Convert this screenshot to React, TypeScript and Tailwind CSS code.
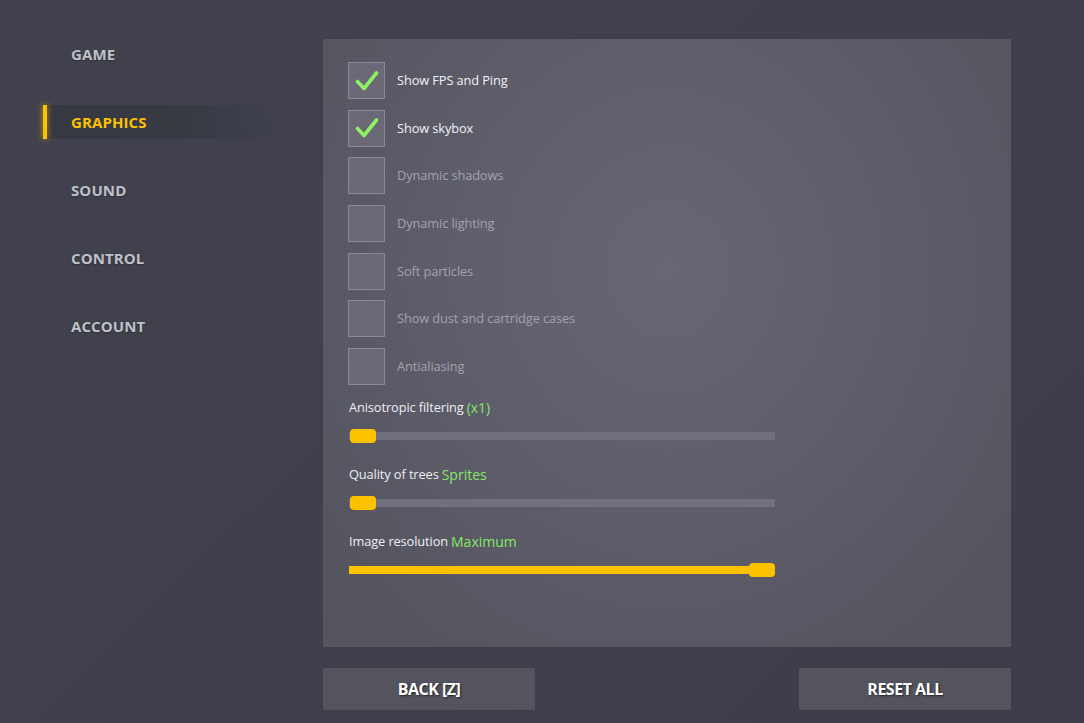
import React from "react";

// ── Data ──────────────────────────────────────────────────────

const menu = ["GAME", "GRAPHICS", "SOUND", "CONTROL", "ACCOUNT"];

const options = [
  { label: "Show FPS and Ping", checked: true },
  { label: "Show skybox", checked: true },
  { label: "Dynamic shadows", checked: false },
  { label: "Dynamic lighting", checked: false },
  { label: "Soft particles", checked: false },
  { label: "Show dust and cartridge cases", checked: false },
  { label: "Antialiasing", checked: false },
];

const sliders = [
  { label: "Anisotropic filtering", value: "(x1)", pct: 0 },
  { label: "Quality of trees", value: "Sprites", pct: 0 },
  { label: "Image resolution", value: "Maximum", pct: 100 },
];

// ── Checkbox ──────────────────────────────────────────────────

function Checkbox({ label, checked }: { label: string; checked: boolean }) {
  return (
    <div className="flex items-center gap-3 h-[37px]">
      <div className="w-[37px] h-[37px] shrink-0 border border-[#8b8996] bg-[#6b6977] flex items-center justify-center">
        {checked && (
          <svg width="24" height="22" viewBox="0 0 24 22">
            <polyline
              points="2.5,11.5 9,18.5 21.5,3"
              fill="none"
              stroke="#8df163"
              strokeWidth="3.6"
              strokeLinecap="round"
              strokeLinejoin="round"
            />
          </svg>
        )}
      </div>
      <span
        className={
          checked
            ? "text-[12.8px] tracking-[-0.1px] text-[#f2f2f5]"
            : "text-[12.8px] tracking-[-0.1px] text-[#a3a2ad]"
        }
      >
        {label}
      </span>
    </div>
  );
}

// ── Slider ────────────────────────────────────────────────────

function Slider({ label, value, pct }: { label: string; value: string; pct: number }) {
  return (
    <div className="flex flex-col gap-3 w-[426px]">
      <div className="h-[18px] flex items-center text-[12.8px] tracking-[-0.1px] text-[#eeeef2]">
        {label}
        <span className="ml-[3px] text-[14px] tracking-normal text-[#86e86a]">{value}</span>
      </div>
      <div className="relative h-[14px] flex items-center">
        <div className="w-full h-[8px] bg-[#72707e]">
          <div className="h-full bg-[#fcc200]" style={{ width: `${pct}%` }} />
        </div>
        <div
          className="absolute top-0 w-[26px] h-[14px] rounded-[4px] bg-[#fcc200]"
          style={{ left: `calc(${pct}% - ${(pct / 100) * 26}px + ${pct === 0 ? 1 : 0}px)` }}
        />
      </div>
    </div>
  );
}

// ── App ───────────────────────────────────────────────────────

export default function App() {
  return (
    <div
      className="w-full h-[723px] overflow-hidden flex bg-[linear-gradient(135deg,#41424e_0%,#3f404c_50%,#3c3d49_100%)]"
      style={{ fontFamily: '"Open Sans", "Noto Sans", sans-serif' }}
    >
      {/* sidebar */}
      <div className="w-[323px] shrink-0 pt-[37px] flex flex-col gap-[34px]">
        {menu.map((m) => {
          const active = m === "GRAPHICS";
          return (
            <div key={m} className="relative h-[34px] flex items-center pl-[71px]">
              {active && (
                <>
                  <div className="absolute left-[47px] top-0 h-full w-[230px] bg-[linear-gradient(90deg,#363842_0%,#373943_60%,rgba(60,61,73,0)_100%)]" />
                  <div className="absolute left-[43px] top-0 h-full w-[4px] bg-[#fcc200] shadow-[0_0_6px_rgba(252,194,0,0.7)]" />
                </>
              )}
              <span
                className={
                  active
                    ? "relative text-[15px] font-bold tracking-[0.1px] text-[#fcc200]"
                    : "relative text-[15px] font-bold tracking-[0.1px] text-[#bfc1c8] [text-shadow:0_1px_2px_rgba(0,0,0,0.3)]"
                }
              >
                {m}
              </span>
            </div>
          );
        })}
      </div>

      {/* main */}
      <div className="w-[688px] shrink-0 pt-[39px] flex flex-col gap-[21px]">
        <div className="h-[608px] pt-[23px] pl-[25px] bg-[radial-gradient(ellipse_at_50%_38%,#686675_0%,#5e5d6a_45%,#555560_85%)]">
          <div className="flex flex-col gap-[10.67px]">
            {options.map((o) => (
              <Checkbox key={o.label} label={o.label} checked={o.checked} />
            ))}
          </div>
          <div className="mt-[14px] pl-px flex flex-col gap-[23px]">
            {sliders.map((s) => (
              <Slider key={s.label} label={s.label} value={s.value} pct={s.pct} />
            ))}
          </div>
        </div>

        <div className="flex justify-between">
          <button className="w-[212px] h-[42px] rounded-[2px] bg-[#54545f] text-white text-[16px] font-bold tracking-[-0.5px] [text-shadow:1px_1px_2px_rgba(0,0,0,0.6)]">
            BACK [Z]
          </button>
          <button className="w-[212px] h-[42px] rounded-[2px] bg-[#54545f] text-white text-[16px] font-bold tracking-[-0.5px] [text-shadow:1px_1px_2px_rgba(0,0,0,0.6)]">
            RESET ALL
          </button>
        </div>
      </div>
    </div>
  );
}
